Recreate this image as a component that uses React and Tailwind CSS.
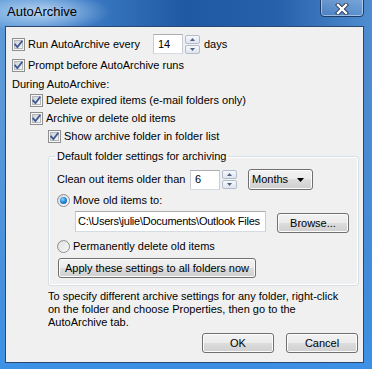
import React from "react";

const font = { fontFamily: '"Liberation Sans", Arial, sans-serif' };

function Check({ checked = true }) {
  return (
    <span className="relative flex h-[13px] w-[13px] shrink-0 items-center justify-center border border-[#8e8f8f] bg-[#f6f6f6]">
      <span className="h-[9px] w-[9px] border border-[#b4b8bd] bg-[linear-gradient(135deg,#cdd1d6,#f7f7f7)]"></span>
      {checked && (
        <svg className="absolute left-0 top-0" width="11" height="11" viewBox="0 0 11 11">
          <path d="M2.2 5.6 L4.4 8 L8.8 2.4" fill="none" stroke="#3e5793" strokeWidth="1.8" strokeLinecap="square" />
        </svg>
      )}
    </span>
  );
}

function Radio({ checked }) {
  return (
    <span className="flex h-[13px] w-[13px] shrink-0 items-center justify-center rounded-full border border-[#8e8f8f] bg-[linear-gradient(135deg,#d6d8db,#fbfbfb)]">
      {checked ? (
        <span className="h-[7px] w-[7px] rounded-full bg-[radial-gradient(circle_at_40%_35%,#8fd4ff_0%,#2a8ad8_45%,#0a4f9a_100%)]"></span>
      ) : (
        <span className="h-[9px] w-[9px] rounded-full bg-[linear-gradient(135deg,#e2e3e5,#f4f4f4)]"></span>
      )}
    </span>
  );
}

function Spin() {
  return (
    <span className="ml-[2px] flex h-[19px] w-[15px] flex-col gap-[1px]">
      <span className="flex h-[9px] w-full items-center justify-center rounded-[2px] border border-[#b3bccb] bg-[linear-gradient(#f6f8fb,#dfe5ee)]">
        <svg width="5" height="3" viewBox="0 0 5 3"><path d="M0 3 L2.5 0 L5 3 Z" fill="#4d6185" /></svg>
      </span>
      <span className="flex h-[9px] w-full items-center justify-center rounded-[2px] border border-[#b3bccb] bg-[linear-gradient(#f6f8fb,#dfe5ee)]">
        <svg width="5" height="3" viewBox="0 0 5 3"><path d="M0 0 L2.5 3 L5 0 Z" fill="#4d6185" /></svg>
      </span>
    </span>
  );
}

function Input({ value, w }) {
  return (
    <span
      className={`flex h-[20px] items-center overflow-hidden whitespace-nowrap border border-t-[#abadb3] border-x-[#c9ccd3] border-b-[#d5dbe3] bg-white ${w}`}
    >
      {value}
    </span>
  );
}

function Button({ children, w, cls = "" }) {
  return (
    <span
      className={`flex h-[20px] items-center justify-center rounded-[3px] border border-[#707070] bg-[linear-gradient(#f2f2f2_0%,#ebebeb_49%,#dddddd_50%,#cfcfcf_100%)] shadow-[inset_0_0_0_1px_#fcfcfc] ${w} ${cls}`}
    >
      {children}
    </span>
  );
}

function Combo() {
  return (
    <span className="ml-[11px] flex h-[21px] w-[65px] items-center rounded-[3px] border border-[#707070] bg-[linear-gradient(#f2f2f2_0%,#ebebeb_49%,#dddddd_50%,#cfcfcf_100%)] pl-[3px] shadow-[inset_0_0_0_1px_#fcfcfc]">
      <span className="flex-1">Months</span>
      <svg width="7" height="4" viewBox="0 0 7 4" className="mr-[8px]"><path d="M0 0 L7 0 L3.5 4 Z" fill="#000" /></svg>
    </span>
  );
}

export default function App() {
  return (
    <div
      style={font}
      className="relative h-[369px] w-[372px] overflow-hidden bg-[radial-gradient(ellipse_70px_20px_at_40px_12px,rgba(220,238,255,0.75),rgba(220,238,255,0)),linear-gradient(180deg,rgba(60,140,225,0)_0%,rgba(60,140,225,0)_25%,rgba(60,140,225,0.75)_80%,rgba(60,145,230,0.95)_100%),linear-gradient(90deg,#5d9ad8_0%,#3f7fc8_20%,#1f58a3_50%,#2861ab_75%,#4f8dd0_100%)] text-[11px] text-black"
    >
      {/* title bar */}
      <div className="flex h-[24px] items-center pl-[7px] text-[13px] text-black">AutoArchive</div>
      {/* close button */}
      <div className="absolute left-[320px] top-[-2px] flex h-[19px] w-[44px] items-center justify-center rounded-b-[4px] border border-[#1d3c66] bg-[linear-gradient(rgba(255,255,255,0.25),rgba(255,255,255,0.08))] shadow-[inset_0_0_0_1px_rgba(255,255,255,0.45)]">
        <svg width="14" height="12" viewBox="0 0 14 12" className="mt-[2px]">
          <path d="M3 2 L11 10 M11 2 L3 10" stroke="#2a3a52" strokeWidth="4.2" strokeLinecap="square" />
          <path d="M3 2 L11 10 M11 2 L3 10" stroke="#ffffff" strokeWidth="2.4" strokeLinecap="square" />
        </svg>
      </div>

      {/* client area */}
      <div className="ml-[5px] mt-[2px] h-[337px] w-[359px] border border-[#2a4870] bg-[#f0f0f0]">
        <div className="flex flex-col pl-[6px] pr-[4px] pt-[7px]">
          <div className="flex h-[20px] items-center">
            <Check />
            <span className="ml-[3px] w-[125px]">Run AutoArchive every</span>
            <Input value="14" w="w-[30px] pl-[4px]" />
            <Spin />
            <span className="ml-[4px]">days</span>
          </div>
          <div className="flex h-[22px] items-center">
            <Check />
            <span className="ml-[3px]">Prompt before AutoArchive runs</span>
          </div>
          <div className="flex h-[16px] items-center">During AutoArchive:</div>
          <div className="flex h-[17px] items-center pl-[18px]">
            <Check />
            <span className="ml-[3px]">Delete expired items (e-mail folders only)</span>
          </div>
          <div className="flex h-[18px] items-center pl-[18px]">
            <Check />
            <span className="ml-[3px]">Archive or delete old items</span>
          </div>
          <div className="flex h-[19px] items-center pl-[36px]">
            <Check />
            <span className="ml-[3px]">Show archive folder in folder list</span>
          </div>

          <fieldset className="ml-[36px] mt-[2px] w-[311px] rounded-[3px] border border-[#d5dfe5] px-[8px] pb-[7px] shadow-[inset_0_0_0_1px_#ffffff]">
            <legend className="ml-[-2px] px-[2px] leading-[16px]">Default folder settings for archiving</legend>
            <div className="mt-[5px] flex h-[21px] items-center">
              <span className="w-[133px]">Clean out items older than</span>
              <Input value="6" w="w-[30px] pl-[4px]" />
              <Spin />
              <Combo />
            </div>
            <div className="flex h-[21px] items-center">
              <Radio checked />
              <span className="ml-[3px]">Move old items to:</span>
            </div>
            <div className="flex h-[22px] items-start pl-[18px]">
              <Input value="C:\Users\julie\Documents\Outlook Files" w="w-[191px] h-[21px] pl-[2px] tracking-[-0.25px]" />
              <Button w="w-[72px]" cls="ml-[11px] mt-[2px]">Browse...</Button>
            </div>
            <div className="mt-[4px] flex h-[18px] items-center">
              <Radio />
              <span className="ml-[3px]">Permanently delete old items</span>
            </div>
            <Button w="w-[198px]" cls="mt-[3px] ml-[1px]">Apply these settings to all folders now</Button>
          </fieldset>

          <p className="ml-[36px] mt-[4px] leading-[13px]">
            To specify different archive settings for any folder, right-click
            <br />
            on the folder and choose Properties, then go to the
            <br />
            AutoArchive tab.
          </p>

          <div className="mt-[4px] flex justify-end gap-[12px] pr-[1px]">
            <Button w="w-[72px]">OK</Button>
            <Button w="w-[72px]">Cancel</Button>
          </div>
        </div>
      </div>
    </div>
  );
}
